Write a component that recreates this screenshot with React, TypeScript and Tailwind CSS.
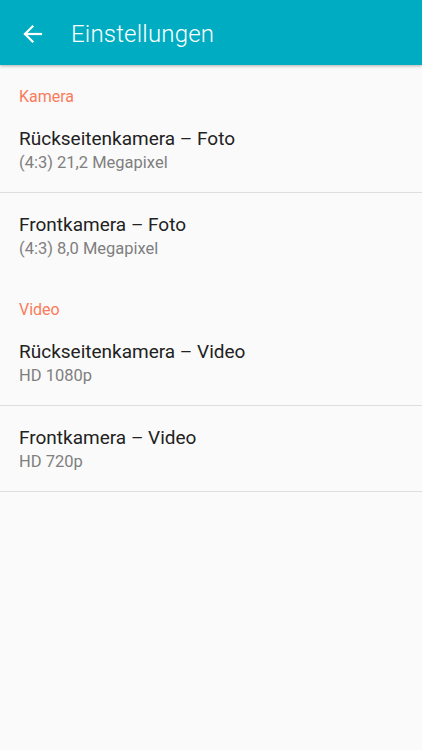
const sections = [
  {
    title: 'Kamera',
    items: [
      { label: 'Rückseitenkamera – Foto', value: '(4:3) 21,2 Megapixel' },
      { label: 'Frontkamera – Foto', value: '(4:3) 8,0 Megapixel' },
    ],
  },
  {
    title: 'Video',
    items: [
      { label: 'Rückseitenkamera – Video', value: 'HD 1080p' },
      { label: 'Frontkamera – Video', value: 'HD 720p' },
    ],
  },
]

function App() {
  return (
    <div className="min-h-[750px] bg-[#fafafa] font-['Roboto',sans-serif]">
      {/* Header */}
      <div className="h-[65px] bg-[#00acc1] flex items-center pt-[2px] shadow-[0_1px_3px_rgba(0,0,0,0.3)] relative">
        <svg className="ml-[23px] w-[20px] h-[20px]" viewBox="0 0 20 20" fill="none" stroke="white" strokeWidth="2.2" strokeLinecap="square">
          <path d="M2 10 H18" />
          <path d="M9.5 2.5 L2 10 L9.5 17.5" />
        </svg>
        <h1 className="ml-[28px] text-white text-[24px] font-light tracking-[0.2px]">Einstellungen</h1>
      </div>

      {sections.map((section, si) => (
        <div key={section.title}>
          <div className="pt-[22px] px-[19px]">
            <div className="text-[16px] leading-[20px] text-[#fb7a5a]">{section.title}</div>
          </div>
          {section.items.map((item, i) => (
            <div
              key={item.label}
              className={`px-[19px] pt-[21px] pb-[19px] ${
                i === 0 || si === sections.length - 1 ? 'border-b border-[#dedede]' : ''
              }`}
            >
              <div className="text-[19px] leading-[22px] text-[#222222]">{item.label}</div>
              <div className="mt-[3px] text-[16.5px] leading-[20px] text-[#7f7f7f]">{item.value}</div>
            </div>
          ))}
        </div>
      ))}
    </div>
  )
}

export default App
